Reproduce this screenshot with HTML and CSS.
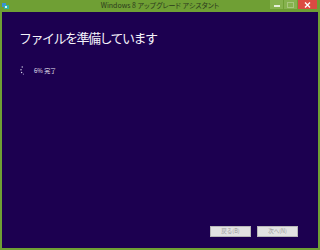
FILE: index.html
```html
<!DOCTYPE html>
<html lang="ja">
<head>
  <meta charset="UTF-8" />
  <meta name="viewport" content="width=device-width, initial-scale=1.0"/>
  <title>Windows 8 アップグレード アシスタント</title>
  <link rel="stylesheet" href="styles.css">
</head>
<body>

  <div class="window">
    <div class="titlebar">
      <svg class="app-icon" width="7" height="6" viewBox="0 0 7 6">
        <rect x="0" y="0" width="4" height="4" fill="#3a8fd6"/>
        <rect x="2" y="2" width="5" height="4" fill="#2fb3a8"/>
        <rect x="3" y="3" width="2" height="2" fill="#d8f0ff"/>
      </svg>
      <div class="title">Windows 8 アップグレード アシスタント</div>
      <div class="controls">
        <div class="ctl min"><span></span></div>
        <div class="ctl max"><span></span></div>
        <div class="ctl close">
          <svg width="7" height="6" viewBox="0 0 7 6">
            <path d="M1 0.5 L6 5.5 M6 0.5 L1 5.5" stroke="#fff" stroke-width="1.4"/>
          </svg>
        </div>
      </div>
    </div>

    <div class="content">
      <h1 class="heading">ファイルを準備しています</h1>

      <div class="progress">
        <svg class="spinner" width="5" height="9" viewBox="0 0 5 9">
          <circle cx="2.2" cy="1" r="0.7" fill="#d8d4ea"/>
          <circle cx="1" cy="3.8" r="0.7" fill="#d8d4ea"/>
          <circle cx="1.6" cy="6.5" r="0.7" fill="#d8d4ea"/>
          <circle cx="3.4" cy="8.1" r="0.6" fill="#9c93c4"/>
        </svg>
        <span class="status">6% 完了</span>
      </div>

      <div class="footer">
        <button class="btn" disabled>戻る(B)</button>
        <button class="btn" disabled>次へ(N)</button>
      </div>
    </div>
  </div>

</body>
</html>
```

FILE: styles.css
```css
body {
  margin: 0;
  background: #6f9f34;
  font-family: "Noto Sans CJK JP", "Noto Sans", sans-serif;
}

.window {
  width: 320px;
  height: 250px;
  background: #6f9f34;
  display: flex;
  flex-direction: column;
}

.titlebar {
  height: 12px;
  display: flex;
  align-items: flex-start;
  position: relative;
}

.app-icon {
  margin: 3px 0 0 2px;
}

.title {
  position: absolute;
  left: 0;
  right: 0;
  top: 0;
  text-align: center;
  font-size: 7px;
  line-height: 11px;
  color: #2c3a1c;
  font-feature-settings: "palt";
}

.controls {
  margin-left: auto;
  margin-right: 3px;
  display: flex;
  position: relative;
}

.ctl {
  height: 9px;
  display: flex;
  align-items: center;
  justify-content: center;
}

.ctl.min,
.ctl.max {
  width: 13px;
  background: #86b24e;
  margin-right: 1px;
}

.ctl.min span {
  width: 6px;
  height: 2px;
  margin-top: 2px;
  background: #e4eed8;
}

.ctl.max span {
  width: 5px;
  height: 4px;
  border: 1px solid #a9c77f;
}

.ctl.close {
  width: 19px;
  background: #dc4b42;
}

.content {
  flex: 1;
  margin: 0 2px 2px;
  background: #1c0050;
  display: flex;
  flex-direction: column;
  padding: 0 20px 11px 17px;
}

.heading {
  margin: 17px 0 0;
  font-size: 13px;
  font-weight: normal;
  line-height: 18px;
  letter-spacing: -1.5px;
  color: #f4f2fa;
}

.progress {
  margin-top: 19px;
  display: flex;
  align-items: center;
}

.spinner {
  margin-left: 1px;
}

.status {
  margin-left: 9px;
  font-size: 6px;
  color: #e8e6f2;
  font-feature-settings: "palt";
}

.footer {
  margin-top: auto;
  display: flex;
  justify-content: flex-end;
  gap: 6px;
}

.btn {
  width: 41px;
  height: 11px;
  padding: 0;
  border: 1px solid #b8b8b8;
  background: #e2e2e2;
  color: #9a9a9a;
  font-family: "Noto Sans CJK JP", sans-serif;
  font-size: 5.5px;
  line-height: 9px;
}
```
